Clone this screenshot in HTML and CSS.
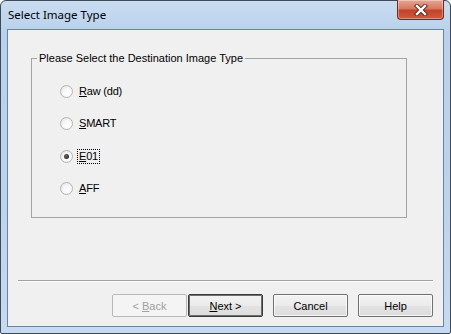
FILE: index.html
```html
<!DOCTYPE html>
<html lang="en">
<head>
    <meta charset="UTF-8">
    <title>Select Image Type</title>
    <link rel="stylesheet" href="styles.css">
</head>
<body>
    <div class="window">
        <div class="titlebar">
            <span class="title">Select Image Type</span>
            <button class="close-btn" aria-label="Close">
                <svg width="16" height="12" viewBox="0 0 16 12">
                    <path d="M4 2 L12 10 M12 2 L4 10" stroke="#5a2418" stroke-width="4.2" stroke-linecap="square"/>
                    <path d="M4 2 L12 10 M12 2 L4 10" stroke="#ffffff" stroke-width="2.4" stroke-linecap="square"/>
                </svg>
            </button>
        </div>
        <div class="client">
            <fieldset class="group">
                <legend>Please Select the Destination Image Type</legend>
                <div class="options">
                    <label class="option"><span class="radio"></span><span class="text"><u>R</u>aw (dd)</span></label>
                    <label class="option"><span class="radio"></span><span class="text"><u>S</u>MART</span></label>
                    <label class="option checked"><span class="radio"></span><span class="text focus"><u>E</u>01</span></label>
                    <label class="option"><span class="radio"></span><span class="text"><u>A</u>FF</span></label>
                </div>
            </fieldset>
            <div class="separator"></div>
            <div class="buttons">
                <div class="pair">
                    <button class="btn disabled">&lt; <u>B</u>ack</button>
                    <button class="btn default"><u>N</u>ext &gt;</button>
                </div>
                <button class="btn">Cancel</button>
                <button class="btn">Help</button>
            </div>
        </div>
    </div>
</body>
</html>
```

FILE: styles.css
```css
html, body {
    margin: 0;
    padding: 0;
}
body {
    width: 451px;
    height: 334px;
    overflow: hidden;
    background: #ffffff;
    font-family: "Liberation Sans", Arial, sans-serif;
    font-size: 11px;
    color: #000;
}
.window {
    box-sizing: border-box;
    width: 451px;
    height: 334px;
    border: 1px solid #3f4a57;
    border-radius: 6px 6px 2px 2px;
    background: linear-gradient(180deg, #c9dcf0 0%, #b9d1ec 10%, #bcd3ec 60%, #c6dbf1 100%);
    display: flex;
    flex-direction: column;
    padding: 0 6px 6px 6px;
}
.titlebar {
    height: 28px;
    display: flex;
    align-items: flex-start;
}
.title {
    font-family: "Noto Sans", "Open Sans", sans-serif;
    font-size: 11.5px;
    line-height: 14px;
    margin: 7px 0 0 1px;
    color: #000;
}
.close-btn {
    margin-left: auto;
    margin-right: 0;
    width: 47px;
    height: 20px;
    margin-top: -1px;
    padding: 0;
    border: 1px solid #6e2a1c;
    border-top: none;
    border-radius: 0 0 4px 4px;
    background: linear-gradient(180deg, #e7a796 0%, #d7775f 45%, #c2432a 55%, #cf5a3e 100%);
    box-shadow: inset 0 0 0 1px rgba(255, 255, 255, 0.35);
    display: flex;
    align-items: center;
    justify-content: center;
}
.client {
    flex: 1;
    border: 1px solid #6b83a0;
    background: #f0f0f0;
    display: flex;
    flex-direction: column;
}
.group {
    box-sizing: border-box;
    margin: 21px 0 0 23px;
    width: 376px;
    height: 167px;
    padding: 0 0 0 5px;
    border: 1px solid #a3a3a3;
    border-radius: 0;
}
.group legend {
    padding: 0 2px;
    line-height: 14px;
}
.options {
    display: flex;
    flex-direction: column;
    gap: 18.5px;
    padding: 19px 0 0 23px;
}
.option {
    display: flex;
    align-items: center;
    height: 14px;
}
.radio {
    box-sizing: border-box;
    width: 13px;
    height: 13px;
    border-radius: 50%;
    border: 1px solid #b4b4b4;
    background: radial-gradient(circle at 65% 65%, #ffffff 0%, #f7f7f7 45%, #dedede 100%);
    display: flex;
    align-items: center;
    justify-content: center;
    margin-right: 5px;
}
.option.checked .radio::after {
    content: "";
    width: 5px;
    height: 5px;
    border-radius: 50%;
    background: radial-gradient(circle at 40% 40%, #6a6a6a, #111111);
}
.text {
    padding: 0 1px;
    line-height: 13px;
    letter-spacing: -0.2px;
}
.text.focus {
    outline: 1px dotted #000;
}
.separator {
    margin: auto 10px 0 10px;
    border-top: 1px solid #a0a0a0;
    border-bottom: 1px solid #ffffff;
}
.buttons {
    display: flex;
    justify-content: flex-end;
    gap: 10px;
    margin: 12px 10px 9px 0;
}
.pair {
    display: flex;
    gap: 1px;
}
.btn {
    box-sizing: border-box;
    width: 75px;
    height: 23px;
    padding: 0;
    font-family: "Liberation Sans", Arial, sans-serif;
    font-size: 11px;
    color: #000;
    border: 1px solid #707070;
    border-radius: 2px;
    background: linear-gradient(180deg, #f3f3f3 0%, #ebebeb 50%, #e3e3e3 51%, #dddddd 100%);
    box-shadow: inset 0 0 0 1px rgba(255, 255, 255, 0.7);
}
.btn.default {
    border: 1px solid #3a3a3a;
    box-shadow: inset 0 0 0 1px #6f6f6f;
}
.btn.disabled {
    color: #a0a0a0;
    border-color: #b8b8b8;
    background: #f4f4f4;
    box-shadow: none;
}
```
